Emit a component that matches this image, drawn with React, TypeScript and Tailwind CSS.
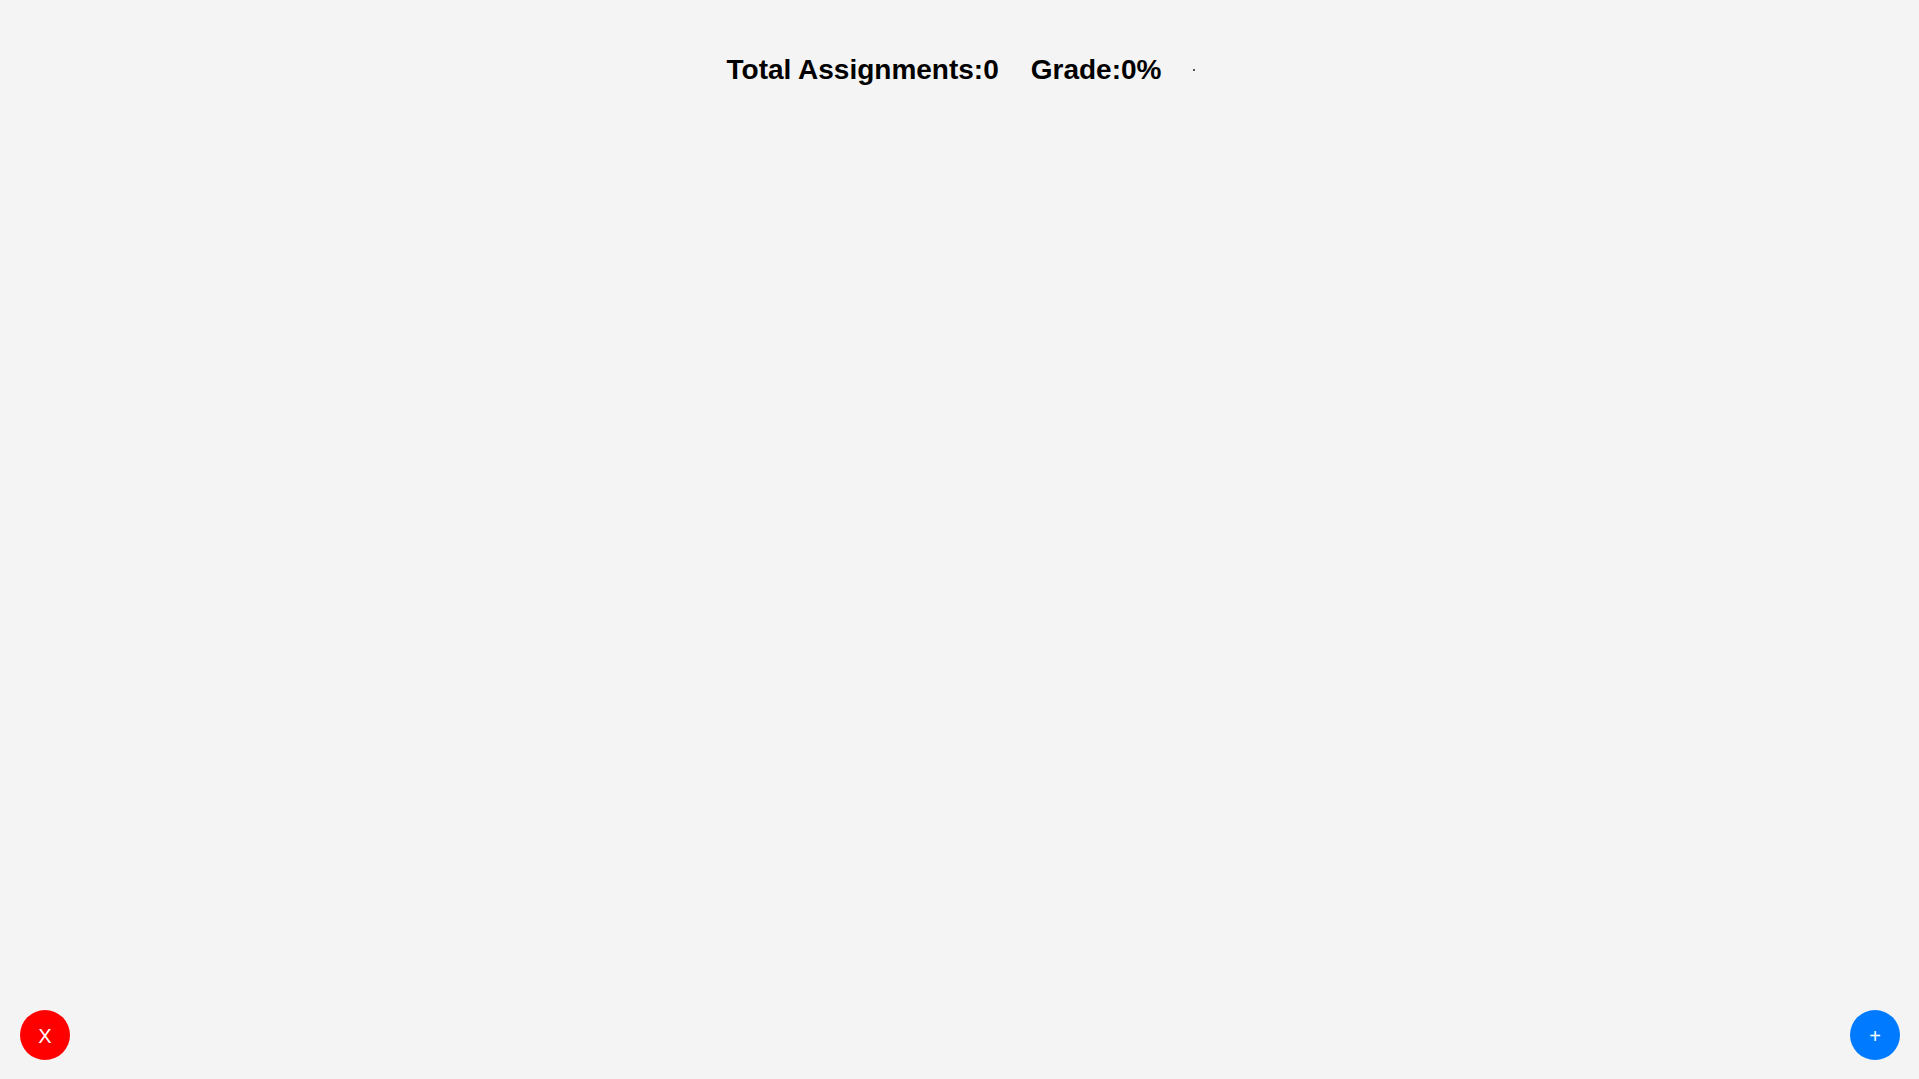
export default function App() {
  return (
    <div className="min-h-screen w-full bg-[#f4f4f4] font-['Liberation_Sans',Arial,sans-serif] text-black">
      <header className="flex items-center justify-center gap-8 pt-[49px] pl-[3px]">
        <h1 className="text-[28px] font-bold leading-normal">Total Assignments:0</h1>
        <h1 className="text-[28px] font-bold leading-normal">Grade:0%</h1>
        <span className="block h-[2px] w-[2px] bg-[#555]"></span>
      </header>

      <button className="fixed bottom-[19px] left-[20px] flex h-[50px] w-[50px] items-center justify-center rounded-full bg-[#ff0000] pt-[2px] text-[20px] text-white">
        X
      </button>
      <button className="fixed bottom-[19px] right-[19px] flex h-[50px] w-[50px] items-center justify-center rounded-full bg-[#007bff] pt-[2px] text-[20px] text-white">
        +
      </button>
    </div>
  );
}
